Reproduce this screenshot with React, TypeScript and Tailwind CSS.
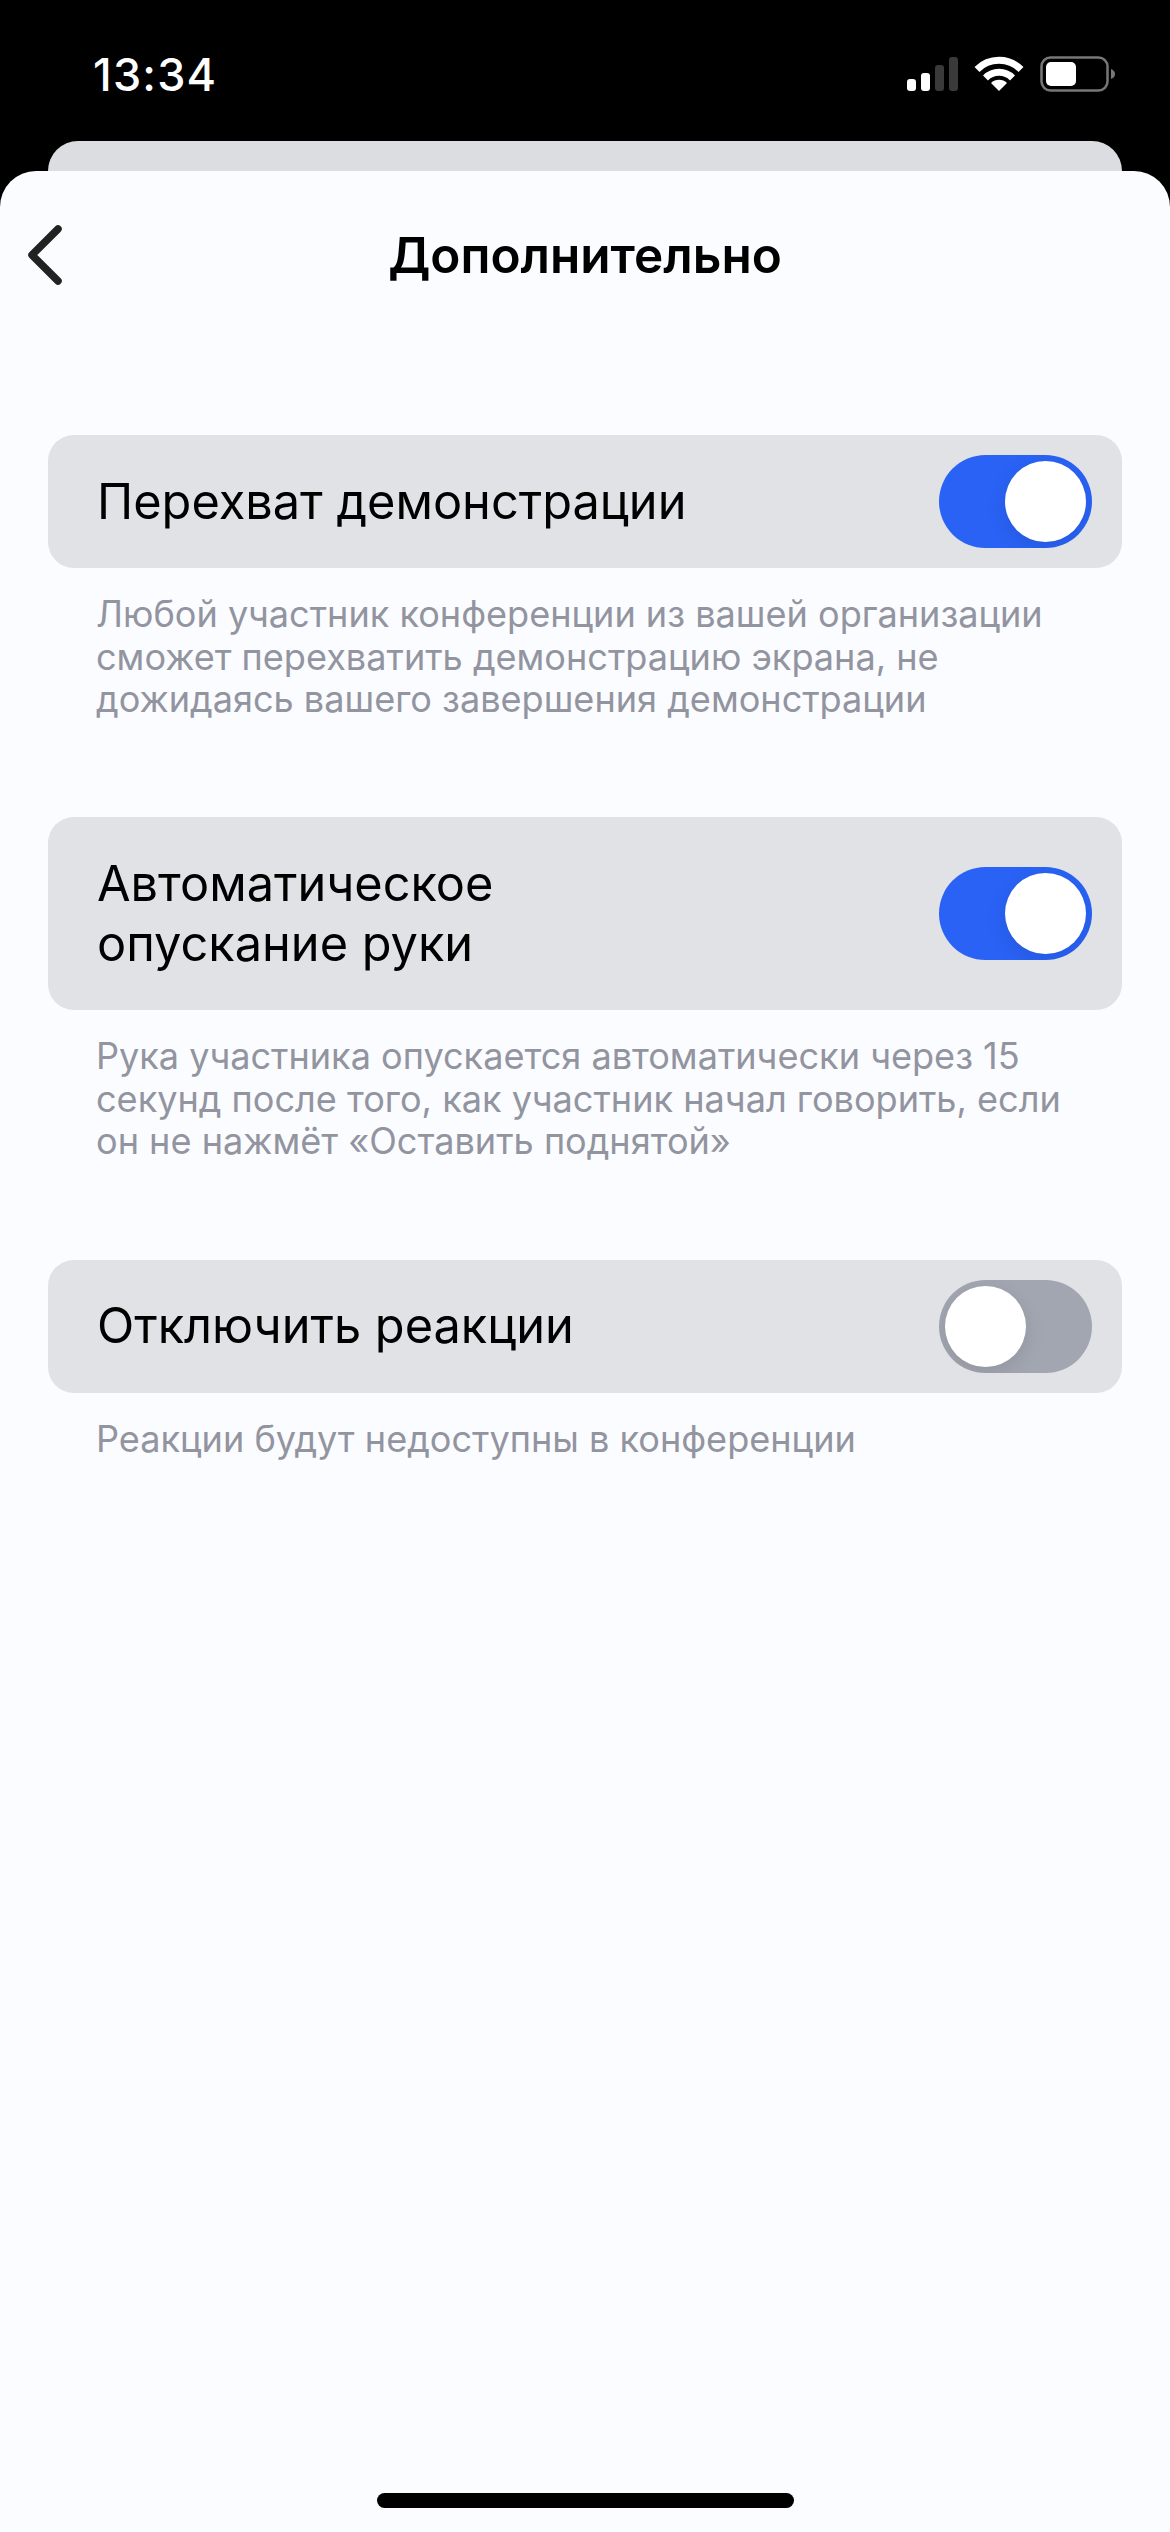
const fontClass = "font-['Inter','Noto_Sans',sans-serif]";

const settings = [
  {
    title: ["Перехват демонстрации"],
    hint: [
      "Любой участник конференции из вашей организации",
      "сможет перехватить демонстрацию экрана, не",
      "дожидаясь вашего завершения демонстрации",
    ],
    on: true,
  },
  {
    title: ["Автоматическое", "опускание руки"],
    hint: [
      "Рука участника опускается автоматически через 15",
      "секунд после того, как участник начал говорить, если",
      "он не нажмёт «Оставить поднятой»",
    ],
    on: true,
  },
  {
    title: ["Отключить реакции"],
    hint: ["Реакции будут недоступны в конференции"],
    on: false,
  },
];

function StatusIcons() {
  return (
    <svg width="208" height="36" viewBox="0 0 208 36" fill="none">
      <rect x="0" y="23" width="9" height="12" rx="3" fill="#fff" />
      <rect x="14" y="17" width="9" height="18" rx="3" fill="#fff" />
      <rect x="28" y="9" width="9" height="26" rx="3" fill="#3a3a3a" />
      <rect x="42" y="1" width="9" height="34" rx="3" fill="#3a3a3a" />
      <path d="M70 13.5A31 31 0 0 1 114 13.5" stroke="#fff" strokeWidth="7" />
      <path d="M78.5 22A19 19 0 0 1 105.5 22" stroke="#fff" strokeWidth="7" />
      <path d="M92 35L84 27A11.5 11.5 0 0 1 100 27Z" fill="#fff" />
      <rect x="134.5" y="1.5" width="66" height="33" rx="9" stroke="#777" strokeWidth="2.5" />
      <rect x="139" y="6" width="30" height="24" rx="5" fill="#fff" />
      <path d="M204 13C207 14 208 16 208 18C208 20 207 22 204 23Z" fill="#777" />
    </svg>
  );
}

function Toggle({ on }: { on: boolean }) {
  return (
    <div
      className={`flex h-[93px] w-[153px] shrink-0 items-center overflow-hidden rounded-full px-[6px] ${
        on ? "justify-end bg-[#2962f5]" : "justify-start bg-[#a2a6b1]"
      }`}
    >
      <div className="h-[81px] w-[81px] rounded-full bg-white shadow-[0_6px_20px_rgba(0,0,0,0.1)]" />
    </div>
  );
}

export default function App() {
  return (
    <div className={`flex h-[2532px] w-[1170px] flex-col overflow-hidden bg-black ${fontClass}`}>
      <div className="flex h-[141px] shrink-0 items-start justify-between pl-[93px] pr-[55px] pt-[56px]">
        <span className="text-[45px] font-medium leading-[38px] tracking-[1.2px] text-white">13:34</span>
        <StatusIcons />
      </div>
      <div className="mx-[48px] h-[30px] shrink-0 rounded-t-[30px] bg-[#dcdde0]" />
      <div className="flex flex-1 flex-col rounded-t-[36px] bg-[#fbfcff]">
        <div className="grid h-[168px] shrink-0 grid-cols-[1fr_auto_1fr] items-center">
          <svg className="ml-[26px]" width="38" height="60" viewBox="0 0 38 60" fill="none">
            <path d="M32 4L6 30L32 56" stroke="#222" strokeWidth="7.5" strokeLinecap="round" strokeLinejoin="round" />
          </svg>
          <h1 className="text-[49.5px] font-semibold leading-[60px] text-black">Дополнительно</h1>
          <div />
        </div>
        <div className="flex flex-col gap-[96.5px] px-[48px] pt-[96px]">
          {settings.map((item) => (
            <section key={item.title[0]}>
              <div className="flex items-center justify-between rounded-[26px] bg-[#e0e2e6] py-[20px] pl-[49px] pr-[30px]">
                <p className="py-[16.5px] text-[48.7px] leading-[60px] text-black">
                  {item.title.map((line) => (
                    <span key={line} className="block">
                      {line}
                    </span>
                  ))}
                </p>
                <Toggle on={item.on} />
              </div>
              <p className="mt-[25px] pl-[48px] text-[36.1px] leading-[42.6px] text-[#9294a0]">
                {item.hint.map((line) => (
                  <span key={line} className="block">
                    {line}
                  </span>
                ))}
              </p>
            </section>
          ))}
        </div>
        <div className="mb-[24px] mt-auto h-[15px] w-[417px] self-center rounded-full bg-black" />
      </div>
    </div>
  );
}
